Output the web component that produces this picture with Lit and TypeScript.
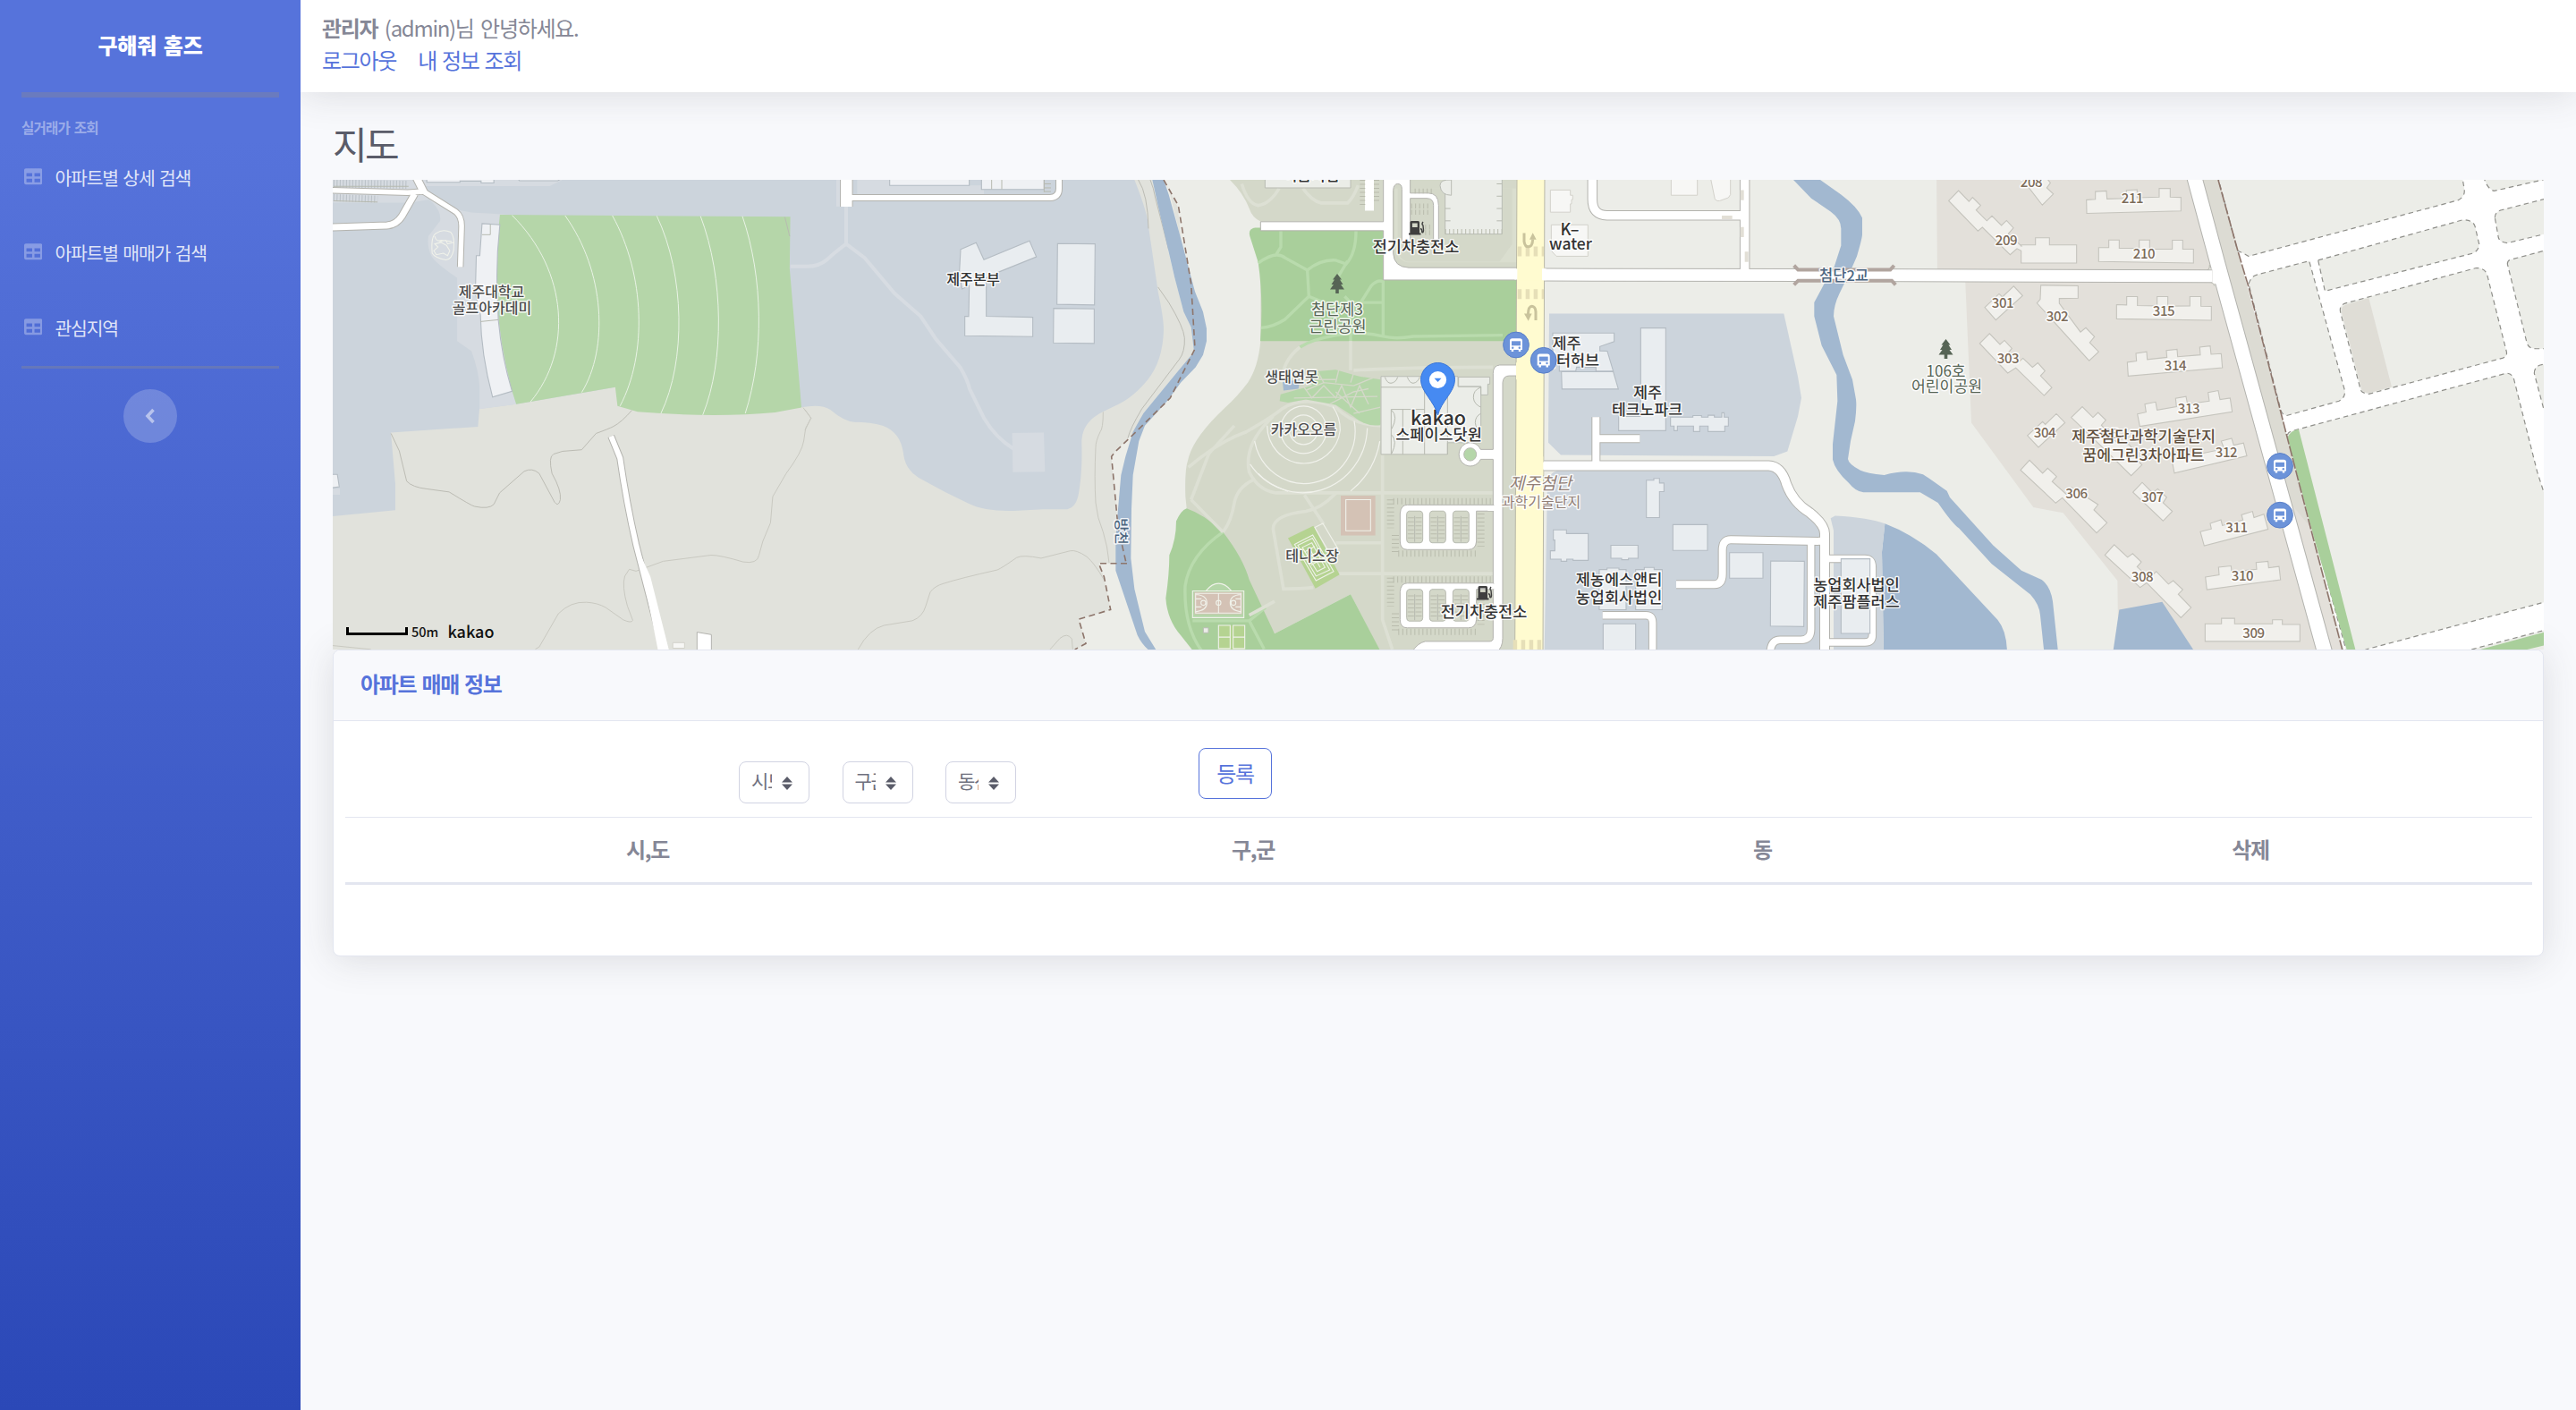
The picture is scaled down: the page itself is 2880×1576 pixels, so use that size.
import { LitElement, html, svg, css } from "lit";
import { customElement, state } from "lit/decorators.js";

const KY = 1 / 2.9037;
const layer = (ox: number, content: unknown, kx = 1 / 3) =>
  svg`<g transform="translate(${ox} 190) scale(${kx} ${KY})">${content}</g>`;
const p = (cls: string, d: string) => svg`<path class=${cls} d=${d}></path>`;
const many = (cls: string, ds: string[]) => ds.map((d) => p(cls, d));
const road = (items: [string, number][]) => svg`
  ${items.map(([d, w]) => svg`<path class="casing" d=${d} stroke-width=${w + 2}></path>`)}
  ${items.map(([d, w]) => svg`<path class="lane" d=${d} stroke-width=${w}></path>`)}`;
const label = (x: number, y: number, text: string, size: number, cls = "") =>
  svg`<text class="lb ${cls}" x=${x} y=${y + size * 0.36} font-size=${size}>${text}</text>`;

@customElement("area-map")
export class AreaMap extends LitElement {
  static styles = css`
    :host { display: block; height: 525px; letter-spacing: 0; word-spacing: 0; }
    svg { display: block; width: 100%; height: 100%; }
    path { vector-effect: non-scaling-stroke; fill: none; }
    .beige { fill: #e1e2dc; }
    .blue { fill: #ccd4dc; }
    .pale { fill: #d6dbe1; }
    .golf { fill: #b5d6a9; }
    .park { fill: #a9cf9b; }
    .olive { fill: #d4d8c9; }
    .olive2 { fill: #dadecf; }
    .water { fill: #a2b8d0; }
    .base { fill: #ecede8; }
    .apt { fill: #e3e0da; }
    .verge { fill: #dcdbd3; }
    .yellow { fill: #fffbd0; stroke: #b9b8a6; stroke-width: 1; }
    .yl { fill: #fffbd0; }
    .bldg { fill: #e9edf0; stroke: #b4bcc3; stroke-width: 1.1; }
    .white { fill: #eff1f4; stroke: #b4bcc3; stroke-width: 1.1; }
    .house { fill: #f1f0ec; stroke: #c5c4bd; stroke-width: 1.1; }
    .hq { fill: #ebede8; stroke: #b9bcb4; stroke-width: 1; }
    .lt { fill: #f7f7f5; stroke: #d3d2cb; stroke-width: 1; }
    .wf { fill: #ffffff; stroke: #b3b3ae; stroke-width: 1; }
    .wp { fill: #ffffff; }
    .lot { fill: #d4d8c9; }
    .casing { stroke: #b3b3ae; }
    .lane { stroke: #ffffff; }
    .arc { stroke: #e9f3e5; stroke-width: 1; }
    .ring { stroke: #f1f2ec; stroke-width: 1.2; }
    .contour { stroke: #bcbcb4; stroke-width: 1; }
    .contour2 { stroke: #c9c9c1; stroke-width: 1; }
    .trail { stroke: #d7dce2; stroke-width: 4; }
    .walk { stroke: #dde0d4; stroke-width: 3.6; }
    .gwalk { stroke: #b9dbad; stroke-width: 3.4; }
    .crack { stroke: #d4d8c9; stroke-width: 1.4; }
    .edge { stroke: #b7bab0; stroke-width: 1; }
    .brown { stroke: #8d756b; stroke-width: 1.6; stroke-dasharray: 7 4.5; }
    .brown2 { stroke: #8d756b; stroke-width: 1.6; stroke-dasharray: 12 2; }
    .plot { fill: #ecede8; stroke: #8f8f8a; stroke-width: 1.2; stroke-dasharray: 5.5 4; }
    .patch { fill: #dfddd6; }
    .tick { stroke: #b9bcad; stroke-dasharray: 1 3.5; }
    .tickg { stroke: #b9c0c6; stroke-dasharray: 1 2.5; }
    .zebra { stroke: #e6dfb8; stroke-width: 11; stroke-dasharray: 4.5 4.5; }
    .dash2 { stroke: #e2dfd6; stroke-width: 4; }
    .turn { stroke: #c9c39c; stroke-width: 3; }
    .turnh { fill: #c9c39c; }
    .bridge { stroke: #b1a59f; stroke-width: 4; }
    .court { fill: #d4c2b5; }
    .lime { fill: #b5d391; }
    .cl { stroke: #f0f2ea; stroke-width: 1.1; }
    text {
      font-family: "Noto Sans CJK KR", sans-serif;
      font-weight: 500;
      text-anchor: middle;
      fill: #333333;
      stroke: rgba(255, 255, 255, 0.85);
      stroke-width: 3px;
      stroke-linejoin: round;
      paint-order: stroke;
    }
    .gray { fill: #4c4c4c; }
    .forest { fill: #566455; font-weight: 400; }
    .num { fill: #7c6b59; letter-spacing: -0.4px; }
    .apn { fill: #5f4f3e; }
    .zone { fill: #927f76; font-weight: 400; }
    .steel { fill: #4b6580; }
    .plain { stroke: none; fill: #111111; }
    .ink { fill: #3f3f3f; }
    .tree { fill: #566455; }
    .pin { fill: #468af2; stroke: #3a76d8; stroke-width: 1; }
    .caret { fill: #468af2; }
    .dot { fill: #ffffff; }
    .bus { fill: #6c93d9; stroke: #5a80c8; stroke-width: 1; }
    .glyph { fill: #6c93d9; }
    .scale { stroke: #000000; stroke-width: 3; }
  `;

  private bus(x: number, y: number) {
    return svg`<g transform="translate(${x} ${y})">
      <circle class="bus" r="14.4"></circle>
      <path class="dot" d="M-7 -4.5Q-7 -7.3 -4.2 -7.3H4.2Q7 -7.3 7 -4.5V5.6H5.3V7.6H2.8V5.6H-2.8V7.6H-5.3V5.6H-7Z"></path>
      <path class="glyph" d="M-5 -4.2H5V0.8H-5Z"></path>
      <circle class="glyph" cx="-3.8" cy="3.2" r="1.2"></circle>
      <circle class="glyph" cx="3.8" cy="3.2" r="1.2"></circle>
    </g>`;
  }

  private tree(x: number, y: number) {
    return svg`<path class="tree" transform="translate(${x} ${y})"
      d="M0 -11L5 -4.5H3L6.5 1H4L8 6.5H1.8V11H-1.8V6.5H-8L-4 1H-6.5L-3 -4.5H-5Z"></path>`;
  }

  private pump(x: number, y: number) {
    return svg`<g transform="translate(${x} ${y})">
      <path class="ink" fill-rule="evenodd" d="M-6 7V-6.5Q-6 -8 -4.5 -8H3Q4.500 -8 4.500 -6.500V5.500H6V7.500H-7.500V5.500H-6ZM-3.600 -5.600V-1H2.200V-5.600Z"></path>
      <path stroke="#3f3f3f" stroke-width="1.4" d="M5.500 0.500Q7.500 1 7.300 4.500Q8.800 5.500 9 2.500L8.500 -3Q6.500 -4.500 8.500 -7"></path>
    </g>`;
  }

  private west() {
    return svg`
      ${layer(900, svg`
        ${p("beige", "M-1600,0H1155L1165,32 1190,150 1240,350 1270,460 1295,510 1305,590 1245,660 1135,790 1105,850 1040,915 1028,930 1045,1110 1070,1277 985,1277 1003,1320 1025,1427 918,1458 942,1537 905,1560 -1600,1600Z")}
        ${p("blue", "M-1600,0H1100L1105,32Q1150,140 1153,190L1185,400Q1203,480 1203,520Q1200,620 1150,680C1090,750 1060,755 1010,780C940,810 928,850 928,890C930,960 925,1010 918,1050Q910,1095 880,1101L800,1101 700,1106Q600,1108 550,1083L470,1045 380,998Q335,970 330,920Q320,850 260,830Q220,818 165,818Q130,815 85,778Q55,758 -12,770L-300,600 -636,705 -969,760 -1092,775 -1097,833 -1389,852 -1374,1020 -1374,1104 -1600,1125Z")}
      `)}
      ${layer(370, svg`
        ${p("pale", "M320,108Q345,135 342,165L305,215Q300,250 315,280Q325,300 395,350V555L440,588Q462,650 465,700V776L580,760 600,700 560,145 440,138 400,130 340,90 250,106H0V32H725L685,52 300,52 270,60 320,108Z")}
        ${p("golf", "M529,145L1438,152 1436,320 1473,771 1390,787Q1200,805 960,785L897,766 890,705 580,760 567,718Q527,560 520,420Q515,280 529,145Z")}
        ${many("arc", [
          "M567,147C745,330 755,590 625,752",
          "M733,148C859,330 869,580 785,722",
          "M881,148C984,340 990,600 905,766",
          "M1020,149C1108,340 1112,620 1033,790",
          "M1157,150C1230,350 1232,620 1164,795",
          "M1288,150C1354,350 1356,600 1297,790",
        ])}
        ${p("edge", "M1421,153L1436,215")}
        ${p("white", "M473,174L529,178Q515,300 522,430L524,487Q535,610 567,718L506,737Q470,600 468,470L452,400 455,278H466Z")}
        ${p("edge", "M468,492L524,486M499,177V210H473")}
        <path class="tickg" d="M8,44L243,48" stroke-width="9"></path>
        <path class="tickg" d="M8,90L146,95" stroke-width="8"></path>
        ${p("edge", "M8,53H243M8,100L146,104")}
        ${p("white", "M300,20V40H404V36H470V42H510V20ZM580,20L590,35H710L722,28V20Z")}
        ${p("cl", "M330,205Q350,190 375,202Q388,215 384,260Q378,290 360,292Q325,285 317,270Q312,215 330,205ZM340,232L360,228 365,240 383,235M325,240L335,250 322,262 330,275 352,270 365,278 372,262 362,245 345,235ZM325,215Q330,235 345,228L378,232")}
        ${road([
          ["M0,66L240,73 290,70 390,135Q410,150 409,185L405,315", 5.5],
          ["M0,186L175,180Q205,178 222,150L262,78", 7],
          ["M268,25L292,75", 8],
        ])}
        ${p("white", "M0,988L20,988 26,1028 0,1032Z")}
        ${p("pale", "M0,1034H28V1054H0Z")}
        ${p("contour", "M188,855L214,912 237,1010Q255,1030 300,1035L370,1045Q440,1090 450,1092 495,1102 510,1085L528,1048 605,978Q630,965 652,985L700,1078Q712,1095 718,1070Q722,1040 692,985Q680,930 697,922L725,913 785,908 830,855Q870,840 885,832 910,818 942,780")}
        ${p("contour2", "M640,1555L652,1548 712,1440Q750,1400 800,1403 835,1405 860,1420L915,1460Q940,1472 945,1462L928,1415Q910,1350 920,1318L934,1296 955,1302 1040,1270 1190,1250Q1220,1250 1290,1272 1335,1280 1340,1250L1352,1205 1376,1145 1383,1060 1425,985Q1475,915 1480,880L1486,838 1503,805 1478,771M0,1543L125,1556")}
        ${road([["M877,864L905,935Q925,1080 955,1215L1043,1570", 6]])}
        ${p("wp", "M955,1215L980,1330 1026,1570H1061L1000,1320Z")}
        ${p("wf", "M1146,1580V1500L1191,1508V1580Z")}
        ${p("lt", "M1070,1534H1107V1552H1070Z")}
      `, 1 / 2.8)}
      ${layer(900, svg`
        ${many("trail", ["M138,118V240Q90,275 75,290Q45,315 0,313H-49", "M138,240L200,285 300,400 388,475 440,550 520,640Q545,680 552,710L600,805Q640,870 700,905"])}
        ${p("pale", "M695,854L801,852 805,979 697,981ZM175,32H285V78H175ZM285,50H600V80H285ZM105,32H120V118H105Z")}
        ${p("bldg", "M522,258L574,236 600,291 753,230 776,282 640,335 608,350V475L764,478V541L536,538V475H549L551,375 527,386 518,330Z")}
        ${p("bldg", "M847,239L973,240 971,438 845,436ZM834,449L970,451V563L833,561Z")}
        ${p("white", "M284,20H551V50H284ZM592,20H802V63H592Z")}
        ${p("edge", "M626,32V63M660,32V63M802,32V72M802,45H825M802,58H825M802,70H825")}
        ${road([["M139,20V119", 12.5], ["M145,90H822Q852,88 852,60V20", 6]])}
        ${many("contour", ["M1118,32Q1150,80 1152,190", "M1184,380L1220,430Q1270,510 1273,545Q1275,590 1255,615L1130,775Q1090,840 1083,870M1158,32Q1170,60 1175,90L1220,260"])}
        ${many("contour2", ["M1000,785Q1000,840 990,850 975,880 975,900 970,1000 975,1080 980,1130 1000,1175 1015,1220 1020,1275", "M178,1556Q215,1490 265,1478L360,1463Q395,1450 405,1415L420,1370Q435,1350 465,1342 520,1325 645,1298 660,1292 710,1258 730,1248 792,1260L890,1236Q910,1232 945,1255 970,1275 1003,1330", "M822,1556L855,1520Q880,1500 895,1522L898,1556", "M0,778L20,805 0,845"])}
        ${p("base", "M1040,918L1085,870 1060,990 1048,1100 1028,930Z")}
        ${p("beige", "M1203,32L1220,60 1262,230 1250,120Z")}
        ${p("water", "M1165,32L1185,120 1240,350 1270,460 1295,510 1305,590 1245,660 1135,790 1100,850 1075,930 1060,990 1050,1100 1042,1200V1300L1115,1510Q1130,1540 1155,1560H1179L1140,1498 1105,1360 1093,1260 1095,1100 1100,990 1120,880 1140,830 1215,750 1260,690 1310,640 1335,600 1347,555V515L1335,460 1308,395 1260,220 1220,80 1203,32Z")}
        ${p("brown", "M1203,32L1252,115 1275,250 1295,370 1308,580 1225,740 1110,850 1040,915 1028,930 1050,1160 1077,1275M1080,1277H985L1003,1320 1025,1427 918,1458 942,1537 905,1556")}
      `)}`;
  }

  private parking(y: number) {
    return svg`
      <path class="tick" d=${`M833,${y - 12}H1160`} stroke-width="7"></path>
      <path class="tick" d=${`M824,${y - 18}V${y + 75}`} stroke-width="8"></path>
      <path class="tick" d=${`M840,${y + 98}V${y + 155}`} stroke-width="8"></path>
      <path class="tick" d=${`M850,${y + 158}H1110`} stroke-width="7"></path>
      <path class="tick" d=${`M1127,${y + 28}V${y + 135}`} stroke-width="8"></path>
      ${p("wf", `M880,${y}H1170V${y + 20}H1112V${y + 118}Q1110,${y + 145} 1085,${y + 145}H880Q856,${y + 145} 856,${y + 118}V${y + 28}Q858,${y} 880,${y}Z`)}
      ${[878, 955, 1033].map((x) => svg`
        ${p("lot edge", `M${x + 8},${y + 20}H${x + 46}Q${x + 54},${y + 22} ${x + 54},${y + 30}V${y + 112}Q${x + 54},${y + 122} ${x + 46},${y + 123}H${x + 8}Q${x},${y + 122} ${x},${y + 112}V${y + 30}Q${x},${y + 22} ${x + 8},${y + 20}Z`)}
        <path class="tick" d=${`M${x + 14},${y + 40}V${y + 118}M${x + 40},${y + 40}V${y + 118}`} stroke-width="7"></path>
        ${p("edge", `M${x + 27},${y + 36}V${y + 120}`)}`)}`;
  }

  private campus() {
    return layer(1280, svg`
      ${p("olive", "M270,10L285,32Q330,75 350,125 360,155 388,167L388,555Q380,640 345,690 310,735 270,770 160,870 145,940 133,970 136,1060L140,1098 300,1300 435,1505 690,1377 790,1565H1247V10Z")}
      ${p("walk", "M325,45Q345,110 380,115 420,110 450,60M530,60Q560,100 590,107H680Q700,90 715,50")}
      ${p("olive2", "M838,60H1246V300H880Q840,290 838,250Z")}
      ${p("olive", "M848,60H1232V240L1190,297H880Q850,290 848,250Z")}
      ${p("park", "M370,187H800V357H1245V555H387Q398,420 380,300L352,215Q345,190 370,187Z")}
      ${p("park", "M140,1098Q200,1118 262,1175 330,1260 350,1330L435,1505 690,1377 792,1565H165L120,1510Q75,1460 70,1390 82,1310 82,1250 105,1200 105,1140Q120,1105 140,1098Z")}
      ${many("gwalk", ["M456,198V250L440,275", "M380,302Q440,260 470,285L545,325Q590,290 640,293L675,305Q708,270 708,198", "M545,325L550,410 470,485Q430,510 390,512", "M550,410L600,430M640,360L680,295M670,410L690,430V555", "M799,357V540M725,428L760,375Q780,355 799,362M690,430H799", "M520,575Q560,550 640,537 720,520 799,540 840,550 900,540L1200,536", "M262,1175Q150,1250 135,1350 130,1480 190,1560M160,1463H350Q380,1440 405,1420M350,1463L400,1555"])}
      ${many("walk", ["M690,555V650", "M797,925V1460L830,1556", "M146,965Q250,880 340,850 430,800 460,775 530,730 640,770 700,830 797,830", "M155,1070L215,920 300,830M155,1070L262,1175", "M430,800Q330,890 350,980 380,1040 440,1048H1167", "M365,1005Q310,1030 300,1080 290,1140 262,1175M640,1050Q590,1100 540,1108 430,1120 430,1165L465,1360Q520,1360 565,1355M535,1055L600,1150M640,1210H792M650,1310H1167M350,1445L435,1400", "M460,690Q460,620 520,575M700,650Q900,640 1167,640"])}
      ${p("golf", "M560,655L640,648 700,665 720,670 790,680V828Q740,835 700,800L640,762 540,745 480,755 452,750 455,728 560,700Z")}
      ${p("crack", "M540,715L600,690 700,700 790,665M530,700L560,740 600,700 640,740 660,700 690,770 720,700 750,760M600,690L580,655M640,690L650,650M690,690L700,660M500,740L780,735M620,760L700,720 750,710M640,720L720,790M560,680H640M700,790L790,770")}
      ${p("water", "M462,688L520,680 515,710 465,716Z")}
      ${many("ring", ["M484,843A48,48 0 1 0 580,843 48,48 0 1 0 484,843Z", "M455,843A77,77 0 1 0 609,843 77,77 0 1 0 455,843Z", "M410,830A123,123 0 0 0 655,845Q655,800 630,768", "M368,880A170,170 0 0 0 702,815", "M353,955A216,216 0 0 0 746,838", "M480,1043Q410,1020 380,985M690,1042Q770,980 788,880"])}
      ${p("hq", "M403,10H690V58H403Z")}
      ${p("wf", "M800,10V168H388V197H800V357H1247V317H885Q835,315 833,270V65Q835,45 848,45 862,45 862,62V235H890V92H945Q968,92 968,115V235H985V115Q985,75 950,75H890V10Z")}
      ${p("wp", "M738,32H768V132H738Z")}
      <path class="tick" d="M730,32V120M777,32V108" stroke-width="6"></path>
      <path class="tick" d="M905,68H970M893,117H960M893,137H960M940,185H960M940,203H960" stroke-width="5.500"></path>
      ${p("hq", "M1007,10H1198V208H1007Z")}
      <path class="tick" d="M1007,200H1198" stroke-width="6"></path>
      ${p("edge", "M1007,125H1025M1007,165H1025M1180,45H1198M1180,85H1198M1180,125H1198M1180,165H1198")}
      ${p("hq", "M1028,32Q990,30 990,50 992,82 1028,82Z")}
      ${p("yellow", "M1248,10H1341L1335,1570H1241Z")}
      ${p("wp", "M1240,320H1256V356H1240ZM1330,320H1345V358H1330Z")}
      ${p("yl", "M1250,315H1339V360H1249Z")}
      ${many("zebra", ["M1250,264H1338", "M1250,403H1338", "M1235,1541H1332"])}
      ${p("turn", "M1272,205V232Q1275,250 1287,249 1300,248 1301,225M1311,488V460Q1310,443 1298,442 1286,442 1285,470")}
      ${p("turnh", "M1290,226L1301,204 1313,226ZM1272,466H1298L1286,490Z")}
      ${p("hq", "M792,670H1050V703H1127V885H1015V923H792ZM1052,672H1157V695H1150V730H1127V703H1052Z")}
      ${p("edge", "M792,705H938V923M826,923V777H938M865,777V923M1015,720V923M805,672Q812,692 825,692 842,690 848,672M880,672Q888,692 900,692 915,690 922,672M1127,705Q1100,715 1102,740 1104,760 1127,770M1127,790Q1108,800 1108,820 1110,840 1127,850M828,780Q850,800 828,840M828,860Q848,880 828,920")}
      ${p("wf", "M1247,633H1190Q1168,635 1168,660V907H1126A38,38 0 1 0 1126,939H1168V1520Q1168,1530 1155,1530H940Q915,1535 895,1565H1180Q1200,1550 1200,1520V690Q1202,668 1222,668H1247Z")}
      ${p("yl", "M1245,625H1260V680H1245Z")}
      ${p("golf edge", "M1070,923A21,21 0 1 0 1112,923 21,21 0 1 0 1070,923Z")}
      ${this.parking(1087)}
      ${this.parking(1341)}
      ${p("wp", "M1150,1089H1180V1106H1150ZM1150,1343H1180V1360H1150Z")}
      ${p("court", "M657,1057H773V1186H657Z")}
      ${p("cl", "M674,1070H757V1171H674Z")}
      ${p("lime", "M480,1195L565,1155 653,1313 572,1358Z")}
      ${p("cl", "M502,1215L563,1185 633,1303 574,1333ZM513,1218L562,1195 620,1298 574,1318ZM528,1225L560,1210 604,1290 578,1303ZM535,1240L570,1222M545,1258L580,1240M558,1282L592,1264M552,1228L588,1290")}
      ${p("cl", "M570,1160L597,1147 648,1230 620,1245Z")}
      ${p("golf", "M160,1366H205Q225,1342 247,1342 270,1342 290,1366H332V1453H160Z")}
      ${p("court", "M166,1370H326V1442H166Z")}
      ${p("cl", "M160,1366H332V1453H160ZM170,1374H322V1438H170ZM247,1374V1438M205,1366Q225,1342 247,1342 270,1342 290,1366M170,1378Q208,1380 208,1405 208,1430 170,1434M322,1378Q286,1380 286,1405 286,1430 322,1434M239,1405A8,8 0 1 0 255,1405 8,8 0 1 0 239,1405ZM188,1405A8,8 0 1 0 204,1405 8,8 0 1 0 188,1405ZM289,1405A8,8 0 1 0 305,1405 8,8 0 1 0 289,1405ZM170,1392H190M170,1418H190M322,1392H304M322,1418H304")}
      ${p("lime", "M247,1478H335V1570H247Z")}
      ${p("cl", "M247,1478H286V1516H247ZM296,1478H335V1516H296ZM247,1516H286V1553H247ZM296,1516H335V1553H296Z")}
      ${p("hq", "M196,1486H213V1502H196Z")}
    `);
  }

  private central() {
    return layer(1680, svg`
      ${p("blue", "M156,466H943L990,670 1002,740 990,800 955,913 910,929 195,925 153,885Z")}
      ${p("blue", "M150,1010Q155,985 185,975H915L975,1080 1065,1165V1565H140Z")}
      ${p("blue", "M1100,1130L1115,1122Q1230,1128 1282,1148L1272,1240 1278,1565H1110V1170Z")}
      ${p("lt", "M160,65H227V82H235V96H231V110H227V137H160ZM163,178H286V280H180L163,262ZM565,20H653V82H565ZM696,20L712,95Q720,103 728,100L757,90 764,80V20Z")}
      ${p("bldg", "M168,529H374V557L326,573V587L351,588 371,653H313V640H248L245,653H190V600H168Z")}
      ${p("bldg", "M197,655H371L388,711H199ZM463,513H547V846H389V800H463Z")}
      ${p("bldg", "M563,802H638V797H667V802H689V796H710V802H735V788H743V802H757V831H745V849H689V831H661V849H640V831H586V846H575V831H563Z")}
      ${p("bldg", "M482,1007H507V1001H526V1016H541V1044H526V1128H482ZM170,1168H214V1180H287V1267H236V1263H215V1270H196V1263H160V1236H175V1201H170ZM363,1218H454V1260H422V1265H399V1260H363ZM571,1151H687V1235H571ZM761,1242H873V1325H761ZM899,1269L1012,1270 1010,1482 898,1480ZM324,1297H350V1292H390V1297H414V1427H324ZM446,1297H475V1290H508V1297H535V1427H446ZM337,1473H446V1570H337Z")}
      ${road([
        ["M301,20V95Q301,147 350,147H800", 9.5],
        ["M812,20V330", 9.5],
        ["M140,340L1140,341 2380,345", 13],
        ["M138,960H892Q935,962 952,1020 975,1080 1030,1112 1080,1150 1080,1180V1570", 10],
        ["M582,1345H710Q737,1345 737,1310V1235Q737,1200 765,1200L1080,1205", 8],
        ["M1034,1210V1490Q1034,1525 1000,1525H930Q897,1525 897,1575", 7.5],
        ["M1095,1262H1215Q1240,1262 1240,1290V1510Q1240,1533 1215,1533H1095", 7.5],
        ["M335,1445H480Q503,1445 503,1470V1580", 7.5],
        ["M313,802V955", 8],
        ["M316,872H460", 8],
      ])}
      ${p("yl", "M50,318H139V358H50Z")}
      ${p("wp", "M132,320H146V358H132ZM126,948H150V972H126Z")}
      ${p("yl", "M120,930H136V990H120Z")}
      ${p("bldg", "M1135,1262H1232V1504H1135Z")}
      ${p("dash2", "M735,154H770M803,65V98M803,185V218M818,265V298")}
      ${many("bridge", ["M977,310L991,324H1300L1313,310", "M977,373L991,359H1305L1318,373"])}
    `);
  }

  private east() {
    return svg`
      ${layer(2060, svg`
        ${p("apt", "M315,10L318,345H411L432,820 640,1095 740,1113 922,1333 925,1570H1640L1180,10Z")}
        ${p("water", "M928,1427L1072,1402 1182,1565H907Z")}
        ${p("water", "M142,1148Q230,1180 315,1247L520,1460Q550,1495 552,1565H138L132,1240Z")}
        ${p("water", "M-185,20L-165,32 -105,92 -40,135Q-5,160 -5,190V245L-30,320 -62,370 -95,430V475L-70,570 -20,665 -17,750 -33,890V940Q-25,975 20,1015 45,1045 70,1046H260L320,1080Q370,1150 390,1162L500,1278 630,1378Q660,1410 663,1445L676,1565H723L705,1400Q697,1350 668,1330L600,1300 505,1218 360,1063 350,1042Q290,1000 270,988 215,970 140,990 80,985 60,975 20,955 18,938L27,880 42,815Q48,770 45,745L33,680 2,600 -30,475Q-30,440 -10,400L5,370 30,320 48,280Q65,225 66,210V155Q50,120 -5,80L-75,32 -90,20Z")}
      `)}
      ${layer(2440, svg`
        ${p("wp", "M115,10L185,260 352,870 545,1565H1225V10Z")}
        ${p("verge", "M60,10H115L185,260 352,870 440,1200 535,1565H500Z")}
        ${p("apt", "M370,1090L430,1160 537,1565H505Z")}
        ${many("plot", [
          "M118,20L185,262Q205,270 222,280L925,98Q950,85 945,60L938,20Z",
          "M1010,20Q1020,60 1045,68L1240,25V20Z",
          "M222,370Q230,345 250,340L425,295 455,400 545,718Q545,740 525,750L350,797Q335,795 330,780Z",
          "M455,293L940,162Q980,162 983,190L995,240Q995,260 975,270L478,393Z",
          "M530,462Q525,440 545,433L985,318Q1015,318 1022,340L1087,590Q1090,605 1075,610L625,727Q605,725 598,715Z",
          "M1048,155Q1048,135 1070,130L1240,88V202L1090,237Q1065,235 1060,220Z",
          "M1090,305Q1090,292 1105,290L1240,255V580H1185Q1160,580 1155,560Z",
          "M1180,660Q1180,640 1200,633L1240,625V880Z",
          "M352,860Q355,848 375,845L1085,660Q1105,658 1112,680L1190,980 1240,1130V1396L620,1555 555,1580Z",
          "M970,1556L1240,1487V1600Z",
        ])}
        ${p("patch", "M534,462Q530,445 547,438L625,415 702,704 625,724Q605,722 601,712Z")}
        ${p("park", "M353,870Q360,845 390,842L581,1560H552L440,1190ZM985,1560L1225,1497V1540L1120,1565Z")}
        ${p("brown2", "M120,32L185,260 225,390 352,870 440,1200 537,1560")}
        ${road([["M39,20L120,310 480,1575", 16]])}
        ${p("wp", "M-20,329H126L135,363H-20Z")}
        ${p("edge", "M-20,327H75Q92,327 91,308M-20,364H90Q103,364 107,376")}
        ${p("wp", "M88,322L110,320 122,372 106,368 96,363Z")}
        ${p("house", "M60,1174L97,1165 93,1147 129,1135 134,1154 203,1136 198,1119 235,1108 240,1128 273,1117 287,1166 73,1220ZM77,1321L123,1314 121,1289 163,1285 165,1304 249,1296 247,1274 287,1270 289,1291 324,1287 329,1330 82,1362ZM76,1473H131V1455H175V1473H302V1460H335V1475H394V1530H76Z")}
      `)}
      ${layer(2060, svg`
        ${p("house", "M356,100L389,67 424,102 436,89 463,115 448,130 484,165 501,149 533,180 550,164 573,188 556,207 600,247 H598V243H647V220H694V243H785V302H599V262L585,255 562,275 469,186 454,198Z")}
        ${p("house", "M595,20L670,114 707,78 685,58 697,42 680,20ZM818,97L848,95V70L885,68 887,94 952,92V66L988,64V90L1062,88V60H1099V88L1135,89V133L819,141ZM859,252H893V227H928V254H995V227H1030V257H1106V228H1141V257H1177V302L859,297Z")}
        ${p("house", "M477,446L525,402 536,412 574,377 604,408 514,487ZM665,374L790,376V416L727,417V433L798,526 816,512 845,541 829,560 859,590 827,619 652,432 663,420ZM919,437L953,438V411H989V440L1055,441V411H1091V442L1165,441V411H1202V442L1237,443V488L919,483Z")}
        ${p("house", "M460,563L493,531 528,566 543,553 568,579 555,594 588,626 605,611 637,640 655,626 679,652 664,668 702,706 676,732 581,642 554,659ZM955,624L986,620 984,595 1020,590 1022,615 1088,608 1086,586 1122,582 1124,606 1200,600 1198,575 1233,571 1236,598 1270,596 1274,642 958,669ZM989,792L1018,786 1014,760 1050,753 1055,779 1120,768 1117,741 1152,735 1157,760 1230,750 1226,722 1260,716 1266,745 1300,740 1307,785 997,832Z")}
        ${p("house", "M620,862L671,817 680,826 717,791 746,820 657,900ZM767,803L804,768 840,803 857,787 883,812 868,828 925,890 942,888 962,892 985,920 975,930 1004,957 968,992 880,908ZM1104,940L1280,905 1270,880 1305,871 1312,893 1345,886 1356,928 1113,984Z")}
        ${p("house", "M597,974L627,942 671,984 688,968 718,995 703,1011 752,1054 768,1030 857,1086 843,1103 887,1145 852,1178 737,1064 715,1081ZM974,1046L1005,1014 1040,1048 1057,1035 1087,1062 1075,1080 1106,1108 1075,1139ZM880,1250L911,1216 956,1257 973,1245 1002,1272 988,1288 1030,1325 1052,1303 1093,1344 1109,1333 1141,1362 1126,1377 1169,1420 1135,1453 1020,1340 998,1355Z")}
      `)}`;
  }

  private labels() {
    const nums: [number, number, string][] = [
      [2271, 204, "208"], [2384, 222, "211"], [2243, 269, "209"], [2397, 284, "210"],
      [2239, 339, "301"], [2300, 354, "302"], [2419, 347.500, "315"], [2245, 401, "303"],
      [2432, 408.500, "314"], [2447, 457, "313"], [2286, 484, "304"], [2489, 506, "312"],
      [2321.500, 552, "306"], [2406.500, 556, "307"], [2500.500, 590, "311"], [2395, 645, "308"],
      [2507, 643.500, "310"], [2519.500, 707.500, "309"],
    ];
    return svg`
      ${label(2356, 485, "305", 15, "num")}
      ${nums.map(([x, y, t]) => label(x, y, t, 15, "num"))}
      ${label(549.5, 326, "제주대학교", 16, "gray")}
      ${label(550, 344, "골프아카데미", 16, "gray")}
      ${label(1088, 312, "제주본부", 16.2)}
      ${label(1466, 195.5, "이음서점", 17)}
      ${label(1583, 276, "전기차충전소", 17.5)}
      ${label(1495, 346, "첨단제3", 17.5, "forest")}
      ${label(1495.5, 365, "근린공원", 17.5, "forest")}
      ${label(1444, 421, "생태연못", 16.2, "gray")}
      ${label(1457.5, 480, "카카오오름", 16, "gray")}
      ${label(1608, 467.5, "kakao", 21.5)}
      ${label(1608.5, 485.5, "스페이스닷원", 17.5)}
      ${label(1467, 621, "테니스장", 16.2, "gray")}
      ${label(1659, 684, "전기차충전소", 17.5)}
      ${label(1755, 257, "K–", 18)}
      ${label(1756, 273, "water", 17.5)}
      ${label(1751.500, 384, "제주", 17.5)}
      ${label(1756, 403, "미터허브", 17.5)}
      ${label(1842, 439, "제주", 17.5)}
      ${label(1841.500, 458, "테크노파크", 17.2)}
      <text class="zone" font-size="19" font-style="italic" transform="translate(1722 547)">제주첨단</text>
      ${label(1723, 561, "과학기술단지", 16, "zone")}
      ${label(2061.500, 308.5, "첨단2교", 16.500, "steel")}
      ${label(1810, 648, "제농에스앤티", 17.5)}
      ${label(1810, 668, "농업회사법인", 17.5)}
      ${label(2075.500, 653.500, "농업회사법인", 17.5)}
      ${label(2075.500, 672.500, "제주팜플러스", 17.5)}
      ${label(2175.500, 415, "106호", 17, "forest")}
      ${label(2176.500, 432, "어린이공원", 17.2, "forest")}
      ${label(2396.500, 488, "제주첨단과학기술단지", 17.5, "apn")}
      ${label(2396.500, 509, "꿈에그린3차아파트", 17.2, "apn")}
      <text class="steel" font-size="16" transform="translate(1248 594) rotate(90)">방천</text>`;
  }

  render() {
    return html`<svg viewBox="372 201 2472 525" preserveAspectRatio="none" role="img">
      <rect x="372" y="201" width="2472" height="525" fill="#ecede8"></rect>
      ${this.west()} ${this.campus()} ${this.east()} ${this.central()}
      ${this.labels()}
      ${this.tree(1495, 317)} ${this.tree(2175.5, 390)}
      ${this.pump(1582.5, 255)} ${this.pump(1658.5, 663)}
      ${this.bus(1695, 385.5)} ${this.bus(1725.7, 402.8)}
      ${this.bus(2549, 521)} ${this.bus(2549, 575.7)}
      <path class="pin" d="M1607.500 464C1604 449 1588.500 438 1588.500 424.500A19 19 0 0 1 1626.500 424.500C1626.500 438 1611 449 1607.500 464Z"></path>
      <circle class="dot" cx="1607.500" cy="424.500" r="9.600"></circle>
      <path class="caret" d="M1603.500 422.800H1611.500L1607.500 427Z"></path>
      <path class="scale" d="M388.5 701V708.500H454.500V701"></path>
      <text class="plain" font-size="14.500" font-weight="700" x="475" y="712">50m</text>
      <text class="plain" font-size="18" x="526.5" y="712.500">kakao</text>
    </svg>`;
  }
}

@customElement("app-root")
export class AppRoot extends LitElement {
  static styles = css`
    :host {
      display: block;
      font-family: "Noto Sans CJK KR", "Noto Sans", sans-serif;
      font-size: 24px;
      line-height: 36px;
      letter-spacing: -0.054em;
      word-spacing: 0.08em;
      color: #858796;
    }
    * { box-sizing: border-box; }
    .page { display: flex; height: 1576px; background: #f8f9fc; overflow: hidden; }
    .side {
      width: 336px;
      flex: none;
      position: relative;
      z-index: 1;
      padding: 0 24px;
      background: linear-gradient(180deg, #5673db 10%, #2b48b7 100%);
      display: flex;
      flex-direction: column;
    }
    .brand {
      height: 103px;
      padding-bottom: 4px;
      display: flex;
      align-items: center;
      justify-content: center;
      color: #fff;
      font-weight: 900;
      letter-spacing: -0.004em;
    }
    .rule { height: 6px; background: rgba(133, 135, 150, 0.42); }
    .rule.thin { height: 3px; margin-top: 1px; }
    .caption {
      height: 47px;
      padding-top: 19px;
      font-size: 15.6px;
      letter-spacing: -0.052em;
      font-weight: 700;
      color: rgba(255, 255, 255, 0.42);
      display: flex;
      align-items: center;
    }
    .item {
      height: 84px;
      padding-bottom: 1px;
      display: flex;
      align-items: center;
      gap: 14.5px;
      padding-left: 2.5px;
      font-size: 20.4px;
      letter-spacing: -0.056em;
      color: rgba(255, 255, 255, 0.84);
      text-decoration: none;
    }
    .item svg { width: 20.5px; height: 20.5px; fill: rgba(255, 255, 255, 0.31); }
    .toggle {
      align-self: center;
      margin-top: 23px;
      width: 60px;
      height: 60px;
      border: 0;
      border-radius: 50%;
      background: rgba(255, 255, 255, 0.2);
      display: flex;
      align-items: center;
      justify-content: center;
    }
    .toggle svg { width: 12px; height: 18px; fill: none; stroke: rgba(255, 255, 255, 0.5); stroke-width: 3.6; }
    .main { flex: 1; min-width: 0; display: flex; flex-direction: column; }
    .top {
      height: 103px;
      padding: 13px 24px 0;
      background: #fff;
      box-shadow: 0 3.6px 42px rgba(58, 59, 69, 0.15);
    }
    .hello { word-spacing: 3.4px; }
    .links { display: flex; gap: 24px; }
    a { color: #5673db; text-decoration: none; }
    .content { padding: 34px 36px 0; }
    h1 { margin: 0; height: 64px; font-size: 42px; font-weight: 400; line-height: 46px; letter-spacing: -0.06em; color: #5a5c69; }
    .card {
      height: 342.5px;
      background: #fff;
      border: 1px solid #e3e6f0;
      border-radius: 8px;
      box-shadow: 0 3.6px 42px rgba(58, 59, 69, 0.15);
      overflow: hidden;
    }
    .head {
      height: 79px;
      padding: 0 30px 4px;
      display: flex;
      align-items: center;
      background: #f8f9fc;
      border-bottom: 1px solid #e3e6f0;
      color: #5673db;
      font-weight: 700;
    }
    .body { padding: 0 12px 0 13px; }
    .form { height: 107px; display: flex; align-items: flex-start; padding: 30px 0 0 440px; }
    .selects { display: flex; gap: 36.5px; padding-top: 15px; margin-right: 204px; }
    .pick {
      width: 79px;
      height: 47px;
      border: 1px solid #d1d3e2;
      border-radius: 8px;
      padding: 0 18px 0 13px;
      display: flex;
      align-items: center;
      justify-content: space-between;
      font-size: 21px;
      color: #6e707e;
    }
    .pick span { width: 23px; overflow: hidden; white-space: nowrap; line-height: 30px; margin-top: -5px; }
    .pick svg { width: 12px; height: 15px; fill: #5a5c69; margin-top: 1px; }
    .add {
      width: 82px;
      height: 57px;
      padding: 0 0 2px;
      border: 1.5px solid #5673db;
      border-radius: 8px;
      background: none;
      font: inherit;
      letter-spacing: inherit;
      color: #5673db;
    }
    .row {
      display: grid;
      grid-template-columns: 676px 678px 461px 1fr;
      height: 76px;
      align-items: center;
      text-align: center;
      font-weight: 700;
      border-top: 1px solid #e3e6f0;
      border-bottom: 3px solid #e3e6f0;
      padding-bottom: 3px;
    }
  `;

  @state() private menu = ["아파트별 상세 검색", "아파트별 매매가 검색", "관심지역"];
  @state() private picks = ["시도선택", "구군선택", "동선택"];
  @state() private columns = ["시,도", "구,군", "동", "삭제"];

  private tableIcon() {
    return html`<svg viewBox="0 0 512 512"><path d="M464 32H48C21.490 32 0 53.490 0 80v352c0 26.510 21.490 48 48 48h416c26.510 0 48-21.490 48-48V80c0-26.510-21.490-48-48-48zM224 416H64v-96h160v96zm0-160H64v-96h160v96zm224 160H288v-96h160v96zm0-160H288v-96h160v96z"></path></svg>`;
  }

  render() {
    return html`
      <div class="page">
        <nav class="side">
          <div class="brand">구해줘 홈즈</div>
          <div class="rule"></div>
          <div class="caption">실거래가 조회</div>
          ${this.menu.map((m) => html`<a class="item">${this.tableIcon()}<span>${m}</span></a>`)}
          <div class="rule thin"></div>
          <button class="toggle" aria-label="toggle"><svg viewBox="0 0 12 18"><path d="M9.500 2L3 9L9.500 16"></path></svg></button>
        </nav>
        <div class="main">
          <header class="top">
            <div class="hello"><b>관리자</b> (admin)님 안녕하세요.</div>
            <div class="links"><a>로그아웃</a><a>내 정보 조회</a></div>
          </header>
          <main class="content">
            <h1>지도</h1>
            <area-map></area-map>
            <section class="card">
              <div class="head">아파트 매매 정보</div>
              <div class="body">
                <div class="form">
                  <div class="selects">
                    ${this.picks.map((t) => html`<div class="pick"><span>${t}</span><svg viewBox="0 0 12 15"><path d="M6 0L12 6.500H0ZM0 8.500H12L6 15Z"></path></svg></div>`)}
                  </div>
                  <button class="add">등록</button>
                </div>
                <div class="row">${this.columns.map((c) => html`<div>${c}</div>`)}</div>
              </div>
            </section>
          </main>
        </div>
      </div>`;
  }
}
